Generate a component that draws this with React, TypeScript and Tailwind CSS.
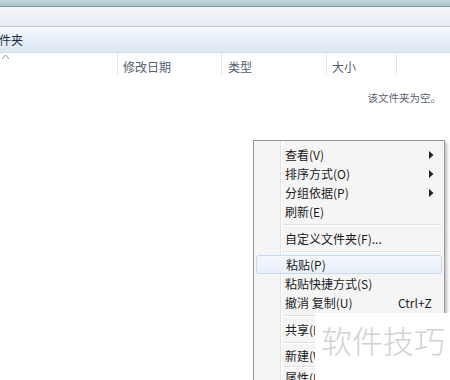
import React from "react";

const font = { fontFamily: '"Noto Sans CJK SC", "Noto Sans", sans-serif' };

function Arrow() {
  return (
    <svg width="5" height="8" viewBox="0 0 5 8" className="absolute right-[8px] top-[6px]">
      <path d="M0 0 L4.5 4 L0 8 Z" fill="#222" />
    </svg>
  );
}

function Item({ label, sub, hot, shortcut }: { label: string; sub?: boolean; hot?: boolean; shortcut?: string }) {
  return (
    <div className="relative h-[19px] px-[2px]">
      <div
        className={
          "relative h-[19px] flex items-center pl-[29px] " +
          (hot ? "border border-[#c9d9ec] rounded-[3px] bg-gradient-to-b from-[#f4f8fd] to-[#e9f0fa] pl-[28px]" : "")
        }
      >
        <span className="text-[12px] leading-none text-[#1b1b1b]">{label}</span>
        {shortcut && <span className="absolute left-[142px] text-[12px] leading-none text-[#1b1b1b]">{shortcut}</span>}
        {sub && <Arrow />}
      </div>
    </div>
  );
}

function Sep({ h }: { h: number }) {
  return (
    <div className="flex items-center pl-[30px] pr-[3px]" style={{ height: h }}>
      <div className="w-full h-[2px] border-t border-[#e0e0e0] border-b-white border-b" />
    </div>
  );
}

export default function App() {
  return (
    <div className="relative w-[450px] h-[380px] overflow-hidden bg-white" style={font}>
      {/* window title strip */}
      <div className="h-[6px] bg-gradient-to-b from-[#c3d6db] to-[#a9c2c9]" />
      <div className="h-[1px] bg-[#7f9aa2]" />
      <div className="h-[19px] bg-gradient-to-b from-[#f4f5f9] to-[#e8eaf2]" />
      <div className="h-[1px] bg-[#c3c7d0]" />
      {/* folder header */}
      <div className="h-[26px] flex items-center bg-gradient-to-b from-[#f6f9fd] via-[#e9f0f9] to-[#dbe6f4] border-b border-[#d2dce8]">
        <span className="ml-[-13px] text-[12px] text-[#1e2d44] leading-none">文件夹</span>
      </div>
      {/* column headers */}
      <div className="relative h-[22px] flex text-[12px] leading-none text-[#4f5e70]">
        <div className="w-[117px] relative">
          <svg width="7" height="4" viewBox="0 0 7 4" className="absolute left-[2px] top-[2px]">
            <path d="M0 4 L3.5 0 L7 4" fill="none" stroke="#8a97a6" strokeWidth="1" />
          </svg>
        </div>
        <div className="w-[104px] border-l border-[#e3e8ee] flex items-end pb-[2px] pl-[5px]">修改日期</div>
        <div className="w-[105px] border-l border-[#e3e8ee] flex items-end pb-[2px] pl-[6px]">类型</div>
        <div className="w-[70px] border-l border-[#e3e8ee] flex items-end pb-[2px] pl-[5px]">大小</div>
        <div className="flex-1 border-l border-[#e3e8ee]" />
      </div>
      <div className="flex justify-end pr-[9px] pt-[18px]">
        <span className="text-[10.5px] leading-none text-[#5a6270]">该文件夹为空。</span>
      </div>

      {/* context menu */}
      <div className="absolute left-[253px] top-[140px] w-[192px] h-[260px] border border-[#979797] bg-[#f5f5f5] shadow-[2px_2px_3px_rgba(0,0,0,0.25)] pt-[4px]">
        <div className="absolute left-[26px] top-0 bottom-0 w-[2px] border-l border-[#e2e3e3] border-r border-r-white" />
        <Item label="查看(V)" sub />
        <Item label="排序方式(O)" sub />
        <Item label="分组依据(P)" sub />
        <Item label="刷新(E)" />
        <Sep h={8} />
        <Item label="自定义文件夹(F)..." />
        <Sep h={7} />
        <Item label="粘贴(P)" hot />
        <Item label="粘贴快捷方式(S)" />
        <Item label="撤消 复制(U)" shortcut="Ctrl+Z" />
        <Sep h={8} />
        <Item label="共享(H)" />
        <Sep h={7} />
        <Item label="新建(W)" />
        <Sep h={3} />
        <Item label="属性(R)" />
      </div>

      {/* watermark */}
      <div className="absolute left-[315px] top-[313px] right-0 bottom-0 bg-white flex items-start pt-[11px] pl-[6px]">
        <span className="text-[31px] leading-none text-[#d2d2d2] font-light whitespace-nowrap">软件技巧</span>
      </div>
    </div>
  );
}
